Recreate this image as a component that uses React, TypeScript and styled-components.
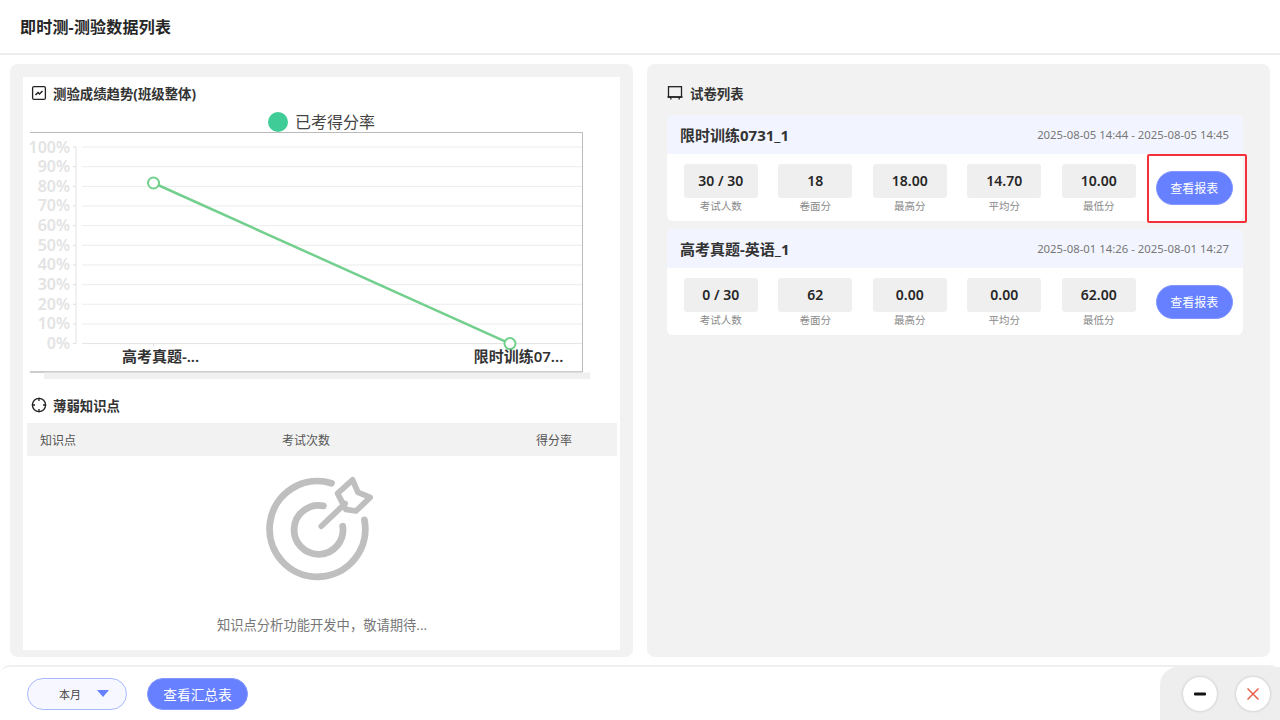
import React from 'react';
import styled, {createGlobalStyle} from 'styled-components';

const GlobalStyle = createGlobalStyle`
    html, body {
        margin: 0;
        padding: 0;
        background: #fff;
        font-family: "Noto Sans", "Noto Sans CJK SC", sans-serif;
    }
    * {
        box-sizing: border-box;
    }
`;

const Page = styled.div`
    width: 1280px;
    height: 720px;
    display: flex;
    flex-direction: column;
    overflow: hidden;
    background: #fff;
`;

const Header = styled.header`
    height: 55px;
    flex: none;
    display: flex;
    align-items: center;
    padding: 0 0 1px 20px;
    border-bottom: 2px solid #ececec;
    font-size: 16px;
    letter-spacing: 0.2px;
    font-weight: 700;
    color: #262626;
`;

const Main = styled.main`
    height: 602px;
    flex: none;
    display: flex;
    gap: 14px;
    padding: 9px 10px 0;
`;

const Panel = styled.section`
    flex: 1;
    height: 593px;
    border-radius: 8px;
    background: #f2f2f2;
`;

const LeftInner = styled.div`
    margin: 13px;
    height: 573px;
    background: #fff;
    padding: 6px 3px 0 4px;
`;

const RightInner = styled.div`
    position: relative;
    padding: 20px 27px 0 20px;
`;

const SectionTitle = styled.div`
    height: 20px;
    display: flex;
    align-items: center;
    gap: 6px;
    padding-left: 4px;
    font-size: 13.4px;
    font-weight: 700;
    color: #333;
`;

const ListTitle = styled(SectionTitle)`
    padding-left: 0;
    gap: 7px;
    margin-top: -1px;
`;

const ChartSvg = styled.svg`
    display: block;
    margin-top: 7px;
`;

const WeakTitle = styled(SectionTitle)`
    margin-top: 13px;
`;

const TableHead = styled.div`
    margin-top: 8px;
    height: 33px;
    background: #f2f2f2;
    display: grid;
    grid-template-columns: 13px 200px 156px 1fr;
    align-items: center;
    font-size: 12px;
    color: #555;
`;

const HeadCell = styled.span<{ $col: number; $pad?: number }>`
    grid-column: ${(p) => p.$col};
    padding-left: ${(p) => p.$pad ?? 0}px;
    white-space: nowrap;
`;

const Empty = styled.div`
    display: flex;
    flex-direction: column;
    align-items: center;
    padding-top: 17px;
`;

const EmptyText = styled.div`
    margin-top: 30px;
    font-size: 13.3px;
    color: #777;
`;

const PaperCard = styled.article`
    margin-top: 12px;
    border-radius: 6px;
    overflow: hidden;
    background: #fff;
    & + & {
        margin-top: 8px;
    }
`;

const CardHead = styled.div`
    height: 39px;
    background: #f2f5ff;
    display: flex;
    align-items: center;
    justify-content: space-between;
    padding: 0 14px 0 13px;
`;

const CardName = styled.span`
    font-size: 15px;
    font-weight: 700;
    color: #333;
`;

const CardTime = styled.span`
    font-size: 11.35px;
    color: #777;
`;

const CardBody = styled.div`
    height: 67px;
    display: flex;
    padding: 10px 0 0 16.8px;
`;

const StatList = styled.div`
    display: flex;
    gap: 20.5px;
`;

const Stat = styled.div`
    width: 74px;
    display: flex;
    flex-direction: column;
    align-items: center;
`;

const StatValue = styled.div`
    width: 74px;
    height: 34px;
    padding-bottom: 1px;
    border-radius: 3px;
    background: #efefef;
    display: flex;
    align-items: center;
    justify-content: center;
    font-size: 14px;
    font-weight: 600;
    color: #262626;
`;

const StatLabel = styled.div`
    margin-top: 1px;
    font-size: 10.5px;
    line-height: 14px;
    color: #8a8a8a;
`;

const PillButton = styled.button<{ $width: number; $size: number }>`
    width: ${(p) => p.$width}px;
    border: 1px solid #8397ff;
    border-radius: 17px;
    background: #6680ff;
    color: #fff;
    font-family: inherit;
    font-size: ${(p) => p.$size}px;
    padding: 0;
`;

const ReportButton = styled(PillButton)`
    height: 34px;
    margin: 7px 0 0 20px;
`;

const Highlight = styled.div`
    position: absolute;
    left: 500px;
    top: 90px;
    width: 100px;
    height: 69px;
    border: 2px solid #f5303a;
    border-radius: 2px;
    pointer-events: none;
`;

const Footer = styled.footer`
    height: 55px;
    margin-top: 8px;
    flex: none;
    display: flex;
    align-items: stretch;
    justify-content: space-between;
    border-top: 2px solid #efefef;
    border-radius: 10px 10px 0 0;
`;

const FooterLeft = styled.div`
    display: flex;
    align-items: center;
    gap: 20px;
    padding: 0 0 0 27px;
`;

const RangeSelect = styled.div`
    width: 100px;
    height: 32px;
    border: 1px solid #aab9ff;
    border-radius: 17px;
    background: #f7f8ff;
    display: flex;
    align-items: center;
    padding-left: 31px;
    gap: 16px;
    font-size: 11px;
    color: #444;
`;

const Caret = styled.span`
    width: 0;
    height: 0;
    border-left: 6px solid transparent;
    border-right: 6px solid transparent;
    border-top: 7px solid #6680ff;
`;

const SummaryButton = styled(PillButton)`
    height: 32px;
    align-self: center;
`;

const WindowControls = styled.div`
    width: 120px;
    background: #eee;
    border-radius: 18px 0 0 0;
    display: flex;
    align-items: center;
    gap: 19px;
    padding: 0 0 0 23px;
`;

const RoundButton = styled.button`
    width: 34px;
    height: 34px;
    padding: 0;
    border: none;
    border-radius: 50%;
    background: #fff;
    box-shadow: 0 0 3px rgba(0, 0, 0, 0.22);
    display: flex;
    align-items: center;
    justify-content: center;
`;

const ChartIcon = () => (
    <svg width="16" height="16" viewBox="0 0 16 16" fill="none" stroke="#222">
        <rect x="1.6" y="1.6" width="12.8" height="12.8" rx="1.5" strokeWidth="1.3" />
        <path d="M4.5 10 L7 7.5 L8.5 9 L11.5 6" strokeWidth="1.5" />
    </svg>
);

const CrosshairIcon = () => (
    <svg width="16" height="16" viewBox="0 0 16 16" fill="none" stroke="#222" strokeWidth="1.3">
        <circle cx="8" cy="8" r="6.6" />
        <path d="M8 0.8 V4 M8 12 V15.2 M0.8 8 H4 M12 8 H15.2" />
    </svg>
);

const BoardIcon = () => (
    <svg width="16" height="16" viewBox="0 0 16 16" fill="none" stroke="#222" strokeWidth="1.3">
        <rect x="1.5" y="1.7" width="13" height="10.3" />
        <path d="M0.5 12 H15.5 M3.8 12 V14.5 M12.2 12 V14.5" />
    </svg>
);

const TargetIcon = () => (
    <svg width="112" height="112" viewBox="107 40 330 330" fill="none" stroke="#bfbfbf" strokeLinecap="round" strokeLinejoin="round">
        <path d="M300 70 A141 141 0 1 0 397 178" strokeWidth="20" />
        <path d="M276 137 A72 72 0 1 0 333 197" strokeWidth="20" />
        <path d="M270 197 L340 130" strokeWidth="17" />
        <path d="M318 100 L362 60 L378 97 L414 112 L372 152 L342 147 Z" strokeWidth="17" />
    </svg>
);

const yTicks = [100, 90, 80, 70, 60, 50, 40, 30, 20, 10, 0];

// chart origin in the svg: page x - 27, page y - 110
const TrendChart = () => (
    <ChartSvg width="590" height="272" viewBox="0 0 590 272">
        <circle cx="251" cy="12" r="10" fill="#40cc96" />
        <text x="268" y="18" fontSize="16" fill="#444">已考得分率</text>
        <path d="M3 22.5 H555.5 V262 H3" fill="none" stroke="#bbb" strokeWidth="1" />
        <path d="M3 262 H555" stroke="#bbb" strokeWidth="1" />
        {yTicks.map((t, i) => {
            const y = 37 + i * 19.66;
            return (
                <g key={t}>
                    <text x="43" y={y + 5.5} fontSize="16" fontWeight="600" fill="#e3e3e3" textAnchor="end">{t}%</text>
                    <path d={`M46 ${y} H49`} stroke="#ddd" strokeWidth="1" />
                    <path d={`M55 ${y} H555`} stroke={t === 0 ? '#e3e3e3' : '#ececec'} strokeWidth="1" />
                </g>
            );
        })}
        <path d="M49 37 V233.6" stroke="#e3e3e3" strokeWidth="1" />
        <path d="M126.5 233.6 v3 M483 233.6 v3" stroke="#ddd" strokeWidth="1" />
        <path d="M126.5 73 L483 233.6" stroke="#73cf8d" strokeWidth="2.5" />
        <circle cx="126.5" cy="73" r="5.5" fill="#fff" stroke="#73cf8d" strokeWidth="2" />
        <circle cx="483" cy="233.6" r="5.5" fill="#fff" stroke="#73cf8d" strokeWidth="2" />
        <text x="133.5" y="252" fontSize="15" fontWeight="600" fill="#333" textAnchor="middle">高考真题-...</text>
        <text x="491.5" y="252" fontSize="15" fontWeight="600" fill="#333" textAnchor="middle">限时训练07...</text>
        <rect x="17" y="262.5" width="546" height="6.5" fill="#f0f0f0" />
    </ChartSvg>
);

const papers = [
    {
        name: '限时训练0731_1',
        time: '2025-08-05 14:44 - 2025-08-05 14:45',
        stats: [['30 / 30', '考试人数'], ['18', '卷面分'], ['18.00', '最高分'], ['14.70', '平均分'], ['10.00', '最低分']],
    },
    {
        name: '高考真题-英语_1',
        time: '2025-08-01 14:26 - 2025-08-01 14:27',
        stats: [['0 / 30', '考试人数'], ['62', '卷面分'], ['0.00', '最高分'], ['0.00', '平均分'], ['62.00', '最低分']],
    },
];

const App = () => {
    return (
        <Page>
            <GlobalStyle />
            <Header>即时测-测验数据列表</Header>
            <Main>
                <Panel>
                    <LeftInner>
                        <SectionTitle><ChartIcon />测验成绩趋势(班级整体)</SectionTitle>
                        <TrendChart />
                        <WeakTitle><CrosshairIcon />薄弱知识点</WeakTitle>
                        <TableHead>
                            <HeadCell $col={2}>知识点</HeadCell>
                            <HeadCell $col={3} $pad={42}>考试次数</HeadCell>
                            <HeadCell $col={4} $pad={140}>得分率</HeadCell>
                        </TableHead>
                        <Empty>
                            <TargetIcon />
                            <EmptyText>知识点分析功能开发中，敬请期待...</EmptyText>
                        </Empty>
                    </LeftInner>
                </Panel>
                <Panel>
                    <RightInner>
                        <ListTitle><BoardIcon />试卷列表</ListTitle>
                        {papers.map((paper) => (
                            <PaperCard key={paper.name}>
                                <CardHead>
                                    <CardName>{paper.name}</CardName>
                                    <CardTime>{paper.time}</CardTime>
                                </CardHead>
                                <CardBody>
                                    <StatList>
                                        {paper.stats.map(([value, label]) => (
                                            <Stat key={label}>
                                                <StatValue>{value}</StatValue>
                                                <StatLabel>{label}</StatLabel>
                                            </Stat>
                                        ))}
                                    </StatList>
                                    <ReportButton $width={77} $size={12}>查看报表</ReportButton>
                                </CardBody>
                            </PaperCard>
                        ))}
                        <Highlight />
                    </RightInner>
                </Panel>
            </Main>
            <Footer>
                <FooterLeft>
                    <RangeSelect>本月<Caret /></RangeSelect>
                    <SummaryButton $width={101} $size={13.7}>查看汇总表</SummaryButton>
                </FooterLeft>
                <WindowControls>
                    <RoundButton aria-label="minimize">
                        <svg width="14" height="14" viewBox="0 0 14 14"><rect x="1" y="5.5" width="12" height="3" rx="1" fill="#111" /></svg>
                    </RoundButton>
                    <RoundButton aria-label="close">
                        <svg width="14" height="14" viewBox="0 0 14 14" stroke="#e8604c" strokeWidth="1.5"><path d="M1.5 1.5 L12.5 12.5 M12.5 1.5 L1.5 12.5" /></svg>
                    </RoundButton>
                </WindowControls>
            </Footer>
        </Page>
    );
};

export default App;
